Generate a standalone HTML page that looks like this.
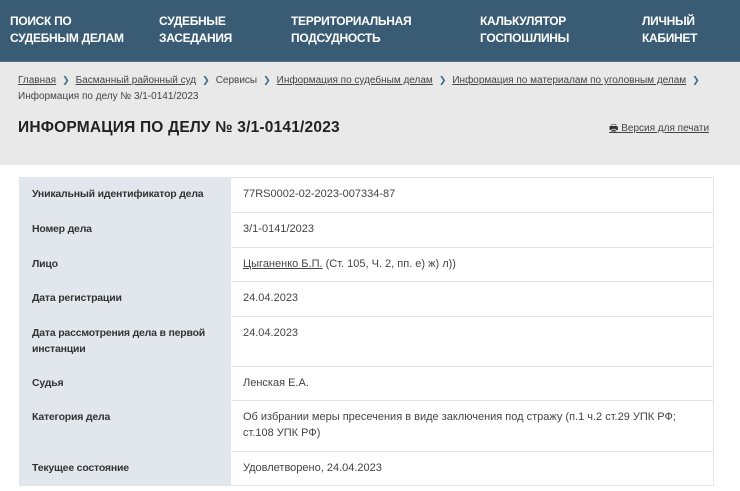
<!DOCTYPE html>
<html><head><meta charset="utf-8"><style>
*{margin:0;padding:0;box-sizing:border-box}
body{width:740px;height:491px;overflow:hidden;background:#fff;font-family:"Liberation Sans","DejaVu Sans",sans-serif;color:#333}
.hd{height:62px;background:#395b73;border-bottom:1px solid #4d6e86;position:relative}
.hd div{position:absolute;top:13px;color:#fff;font-size:12px;line-height:17px;font-weight:bold;letter-spacing:-0.3px}
.gr{height:103px;background:#e9e9e9;position:relative}
.bc{position:absolute;left:18px;top:10px;font-size:10px;line-height:16px;color:#444;width:710px}
.bc a{color:#444;text-decoration:underline}
.bc b{color:#3a6d8a;margin:0 6px;font-size:9px}
h1{position:absolute;left:18px;top:57px;font-size:15.5px;font-weight:900;color:#222;letter-spacing:0.2px}
.pr{position:absolute;left:609px;top:59px;font-size:10px;color:#444;text-decoration:underline}
table{position:absolute;left:19px;top:177px;width:695px;border-collapse:collapse;font-size:11px}
td{border:1px solid #e2e5ea;padding:8px 12px;vertical-align:top;line-height:16px}
td.l{width:211px;background:#e2e7ee;color:#333;font-weight:bold;font-size:10.5px;letter-spacing:-0.2px}
td.r{color:#444}
</style></head><body>
<div class="hd">
<div style="left:10px">ПОИСК ПО<br>СУДЕБНЫМ ДЕЛАМ</div>
<div style="left:159px">СУДЕБНЫЕ<br>ЗАСЕДАНИЯ</div>
<div style="left:291px">ТЕРРИТОРИАЛЬНАЯ<br>ПОДСУДНОСТЬ</div>
<div style="left:480px">КАЛЬКУЛЯТОР<br>ГОСПОШЛИНЫ</div>
<div style="left:642px">ЛИЧНЫЙ<br>КАБИНЕТ</div>
</div>
<div class="gr">
<div class="bc"><a>Главная</a><b>❯</b><a>Басманный районный суд</a><b>❯</b>Сервисы<b>❯</b><a>Информация по судебным делам</a><b>❯</b><a>Информация по материалам по уголовным делам</a><b>❯</b><br>Информация по делу № 3/1-0141/2023</div>
<h1>ИНФОРМАЦИЯ ПО ДЕЛУ № 3/1-0141/2023</h1>
<div class="pr"><span style="text-decoration:none;color:#333">🖶</span> Версия для печати</div>
</div>
<table>
<tr style="height:35px"><td class="l">Уникальный идентификатор дела</td><td class="r">77RS0002-02-2023-007334-87</td></tr>
<tr style="height:35px"><td class="l">Номер дела</td><td class="r">3/1-0141/2023</td></tr>
<tr style="height:34px"><td class="l">Лицо</td><td class="r"><u>Цыганенко Б.П.</u> (Ст. 105, Ч. 2, пп. е) ж) л))</td></tr>
<tr style="height:35px"><td class="l">Дата регистрации</td><td class="r">24.04.2023</td></tr>
<tr style="height:50px"><td class="l">Дата рассмотрения дела в первой инстанции</td><td class="r">24.04.2023</td></tr>
<tr style="height:34px"><td class="l">Судья</td><td class="r">Ленская Е.А.</td></tr>
<tr style="height:51px"><td class="l">Категория дела</td><td class="r">Об избрании меры пресечения в виде заключения под стражу (п.1 ч.2 ст.29 УПК РФ; ст.108 УПК РФ)</td></tr>
<tr style="height:34px"><td class="l">Текущее состояние</td><td class="r">Удовлетворено, 24.04.2023</td></tr>
</table>
</body></html>
